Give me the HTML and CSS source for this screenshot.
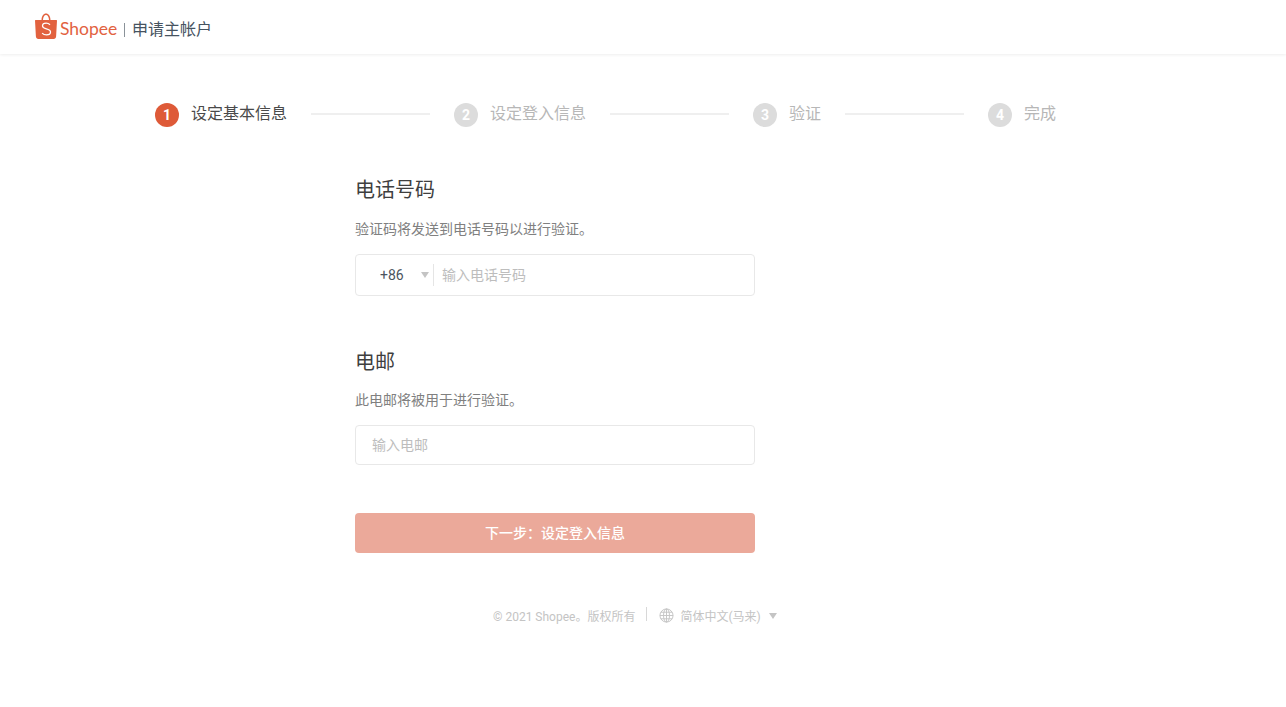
FILE: index.html
```html
<!DOCTYPE html>
<html lang="zh-CN">
<head>
<meta charset="utf-8">
<title>申请主帐户</title>
<link rel="stylesheet" href="styles.css">
</head>
<body>
<header class="topbar">
  <svg class="bag" viewBox="0 0 22 26" width="22" height="26" aria-hidden="true">
    <path class="bag-fill" d="M.6 7h20.800c.4 0 .6.3.6.600l-.9 15.900c-.1 1.400-1.100 2.400-2.400 2.500H3.300c-1.300-.1-2.300-1.100-2.400-2.500L0 7.600C0 7.300.200 7 .6 7zM6.500 7C6.600 3.200 8.500.6 11 .6s4.400 2.600 4.500 6.400h-1.500C13.900 4.100 12.700 2 11 2S8.100 4.100 8 7z"/>
    <path class="bag-s" d="M15 11.700c-.9-.9-2.400-1.500-3.900-1.500-2.100 0-3.600 1-3.600 2.700 0 3.700 8 2 8 6 0 1.800-1.800 2.900-4 2.900-1.700 0-3.300-.6-4.400-1.700"/>
  </svg>
  <span class="brand">Shopee</span>
  <span class="brand-rule"></span>
  <span class="page-title">申请主帐户</span>
</header>

<main class="page">
  <ol class="steps">
    <li class="step step-on"><span class="dot">1</span><span class="step-label">设定基本信息</span></li>
    <li class="step-line"></li>
    <li class="step"><span class="dot">2</span><span class="step-label">设定登入信息</span></li>
    <li class="step-line"></li>
    <li class="step"><span class="dot">3</span><span class="step-label">验证</span></li>
    <li class="step-line"></li>
    <li class="step"><span class="dot">4</span><span class="step-label">完成</span></li>
  </ol>

  <form class="form">
    <section class="field field-phone">
      <h2 class="field-title">电话号码</h2>
      <p class="field-desc">验证码将发送到电话号码以进行验证。</p>
      <div class="input-box input-phone">
        <span class="code">+86</span>
        <span class="caret"></span>
        <span class="input-rule"></span>
        <span class="placeholder">输入电话号码</span>
      </div>
    </section>

    <section class="field field-mail">
      <h2 class="field-title">电邮</h2>
      <p class="field-desc">此电邮将被用于进行验证。</p>
      <div class="input-box input-mail">
        <span class="placeholder">输入电邮</span>
      </div>
    </section>

    <button class="next" type="button">下一步：设定登入信息</button>
  </form>

  <footer class="foot">
    <span>© 2021 Shopee。版权所有</span>
    <span class="foot-rule"></span>
    <svg class="globe" viewBox="0 0 16 16" width="15" height="15" aria-hidden="true">
      <circle cx="8" cy="8" r="7"/>
      <ellipse cx="8" cy="8" rx="3.200" ry="7"/>
      <path d="M8 1v14M1 8h14M2 4.500h12M2 11.500h12"/>
    </svg>
    <span class="lang">简体中文(马来)</span>
    <span class="foot-caret"></span>
  </footer>
</main>
</body>
</html>
```
FILE: styles.css
```css
* { box-sizing: border-box; }

html, body {
  margin: 0;
  padding: 0;
  background: #fff;
}

body {
  font-family: Roboto, "Noto Sans CJK SC", sans-serif;
  height: 707px;
  overflow: hidden;
}

.topbar {
  height: 54px;
  display: flex;
  align-items: center;
  padding: 0 0 0 35px;
  box-shadow: 0 1px 3px rgba(0, 0, 0, .07);
}

.bag {
  margin: -3px 0 0 0;
  flex: none;
}

.bag-fill { fill: #e2623f; }

.bag-s {
  fill: none;
  stroke: #fff;
  stroke-width: 1.300;
}

.brand {
  margin: 4px 0 0 3px;
  font-family: Lato, sans-serif;
  font-size: 17.500px;
  font-weight: 400;
  line-height: 24px;
  color: #e2623f;
  width: 56px;
}

.brand-rule {
  width: 1px;
  height: 14px;
  margin: 6px 8px 0 8px;
  background: #8a9299;
}

.page-title {
  font-size: 16px;
  line-height: 24px;
  margin: 6px 0 0 -1px;
  color: #46535f;
}

.steps {
  list-style: none;
  margin: 0;
  padding: 38px 0 0 155px;
  display: flex;
  align-items: center;
  gap: 24px;
  height: 84px;
}

.step {
  display: flex;
  align-items: center;
  gap: 12px;
}

.dot {
  width: 24px;
  height: 24px;
  border-radius: 50%;
  background: #dcdcdc;
  color: #fff;
  font-size: 14px;
  font-weight: 700;
  line-height: 24px;
  text-align: center;
}

.step-label {
  font-size: 16px;
  line-height: 22px;
  margin-top: -2px;
  color: #b7b7b7;
}

.step-on .dot { background: #de5a38; }
.step-on .step-label { color: #4a4a4a; }

.step-line {
  width: 119px;
  height: 2px;
  margin-top: -2px;
  background: #efefef;
}

.form {
  width: 400px;
  margin: 0 0 0 355px;
}

.field-title {
  margin: 0;
  font-size: 20px;
  font-weight: 400;
  line-height: 28px;
  color: #3f3f3f;
}

.field-desc {
  margin: 15px 0 0 0;
  font-size: 14px;
  line-height: 20px;
  color: #808080;
}

.field-phone { padding-top: 38px; }
.field-mail { padding-top: 52px; }
.field-mail .field-desc { margin-top: 14px; }

.input-box {
  display: flex;
  align-items: center;
  margin-top: 15px;
  border: 1px solid #e8e8e8;
  border-radius: 4px;
  font-size: 14px;
}

.input-phone { height: 42px; }

.input-mail {
  height: 40px;
  padding-left: 16px;
}

.code {
  margin-left: 24px;
  width: 41px;
  color: #4c5560;
}

.caret {
  width: 0;
  height: 0;
  border-left: 4px solid transparent;
  border-right: 4px solid transparent;
  border-top: 6px solid #c4c4c4;
}

.input-rule {
  width: 1px;
  height: 22px;
  margin: 0 8px 0 4px;
  background: #e5e5e5;
}

.placeholder {
  padding-bottom: 3px;
  color: #bdbdbd;
}

.next {
  display: block;
  width: 100%;
  height: 40px;
  margin: 48px 0 0 0;
  padding: 0 0 2px 0;
  border: 0;
  border-radius: 4px;
  background: #eba99a;
  color: #fff;
  font-family: inherit;
  font-size: 14px;
  font-weight: 500;
}

.foot {
  display: flex;
  align-items: center;
  margin: 51px 0 0 493px;
  height: 22px;
  font-size: 12px;
  color: #c4c4c4;
}

.foot-rule {
  width: 1px;
  height: 14px;
  margin: -2px 12px 0 11px;
  background: #d8d8d8;
}

.globe {
  fill: none;
  stroke: #c4c4c4;
  stroke-width: 1;
}

.lang { margin-left: 6px; }

.foot-caret {
  margin: 2px 0 0 8px;
  width: 0;
  height: 0;
  border-left: 4px solid transparent;
  border-right: 4px solid transparent;
  border-top: 6px solid #c4c4c4;
}
```
